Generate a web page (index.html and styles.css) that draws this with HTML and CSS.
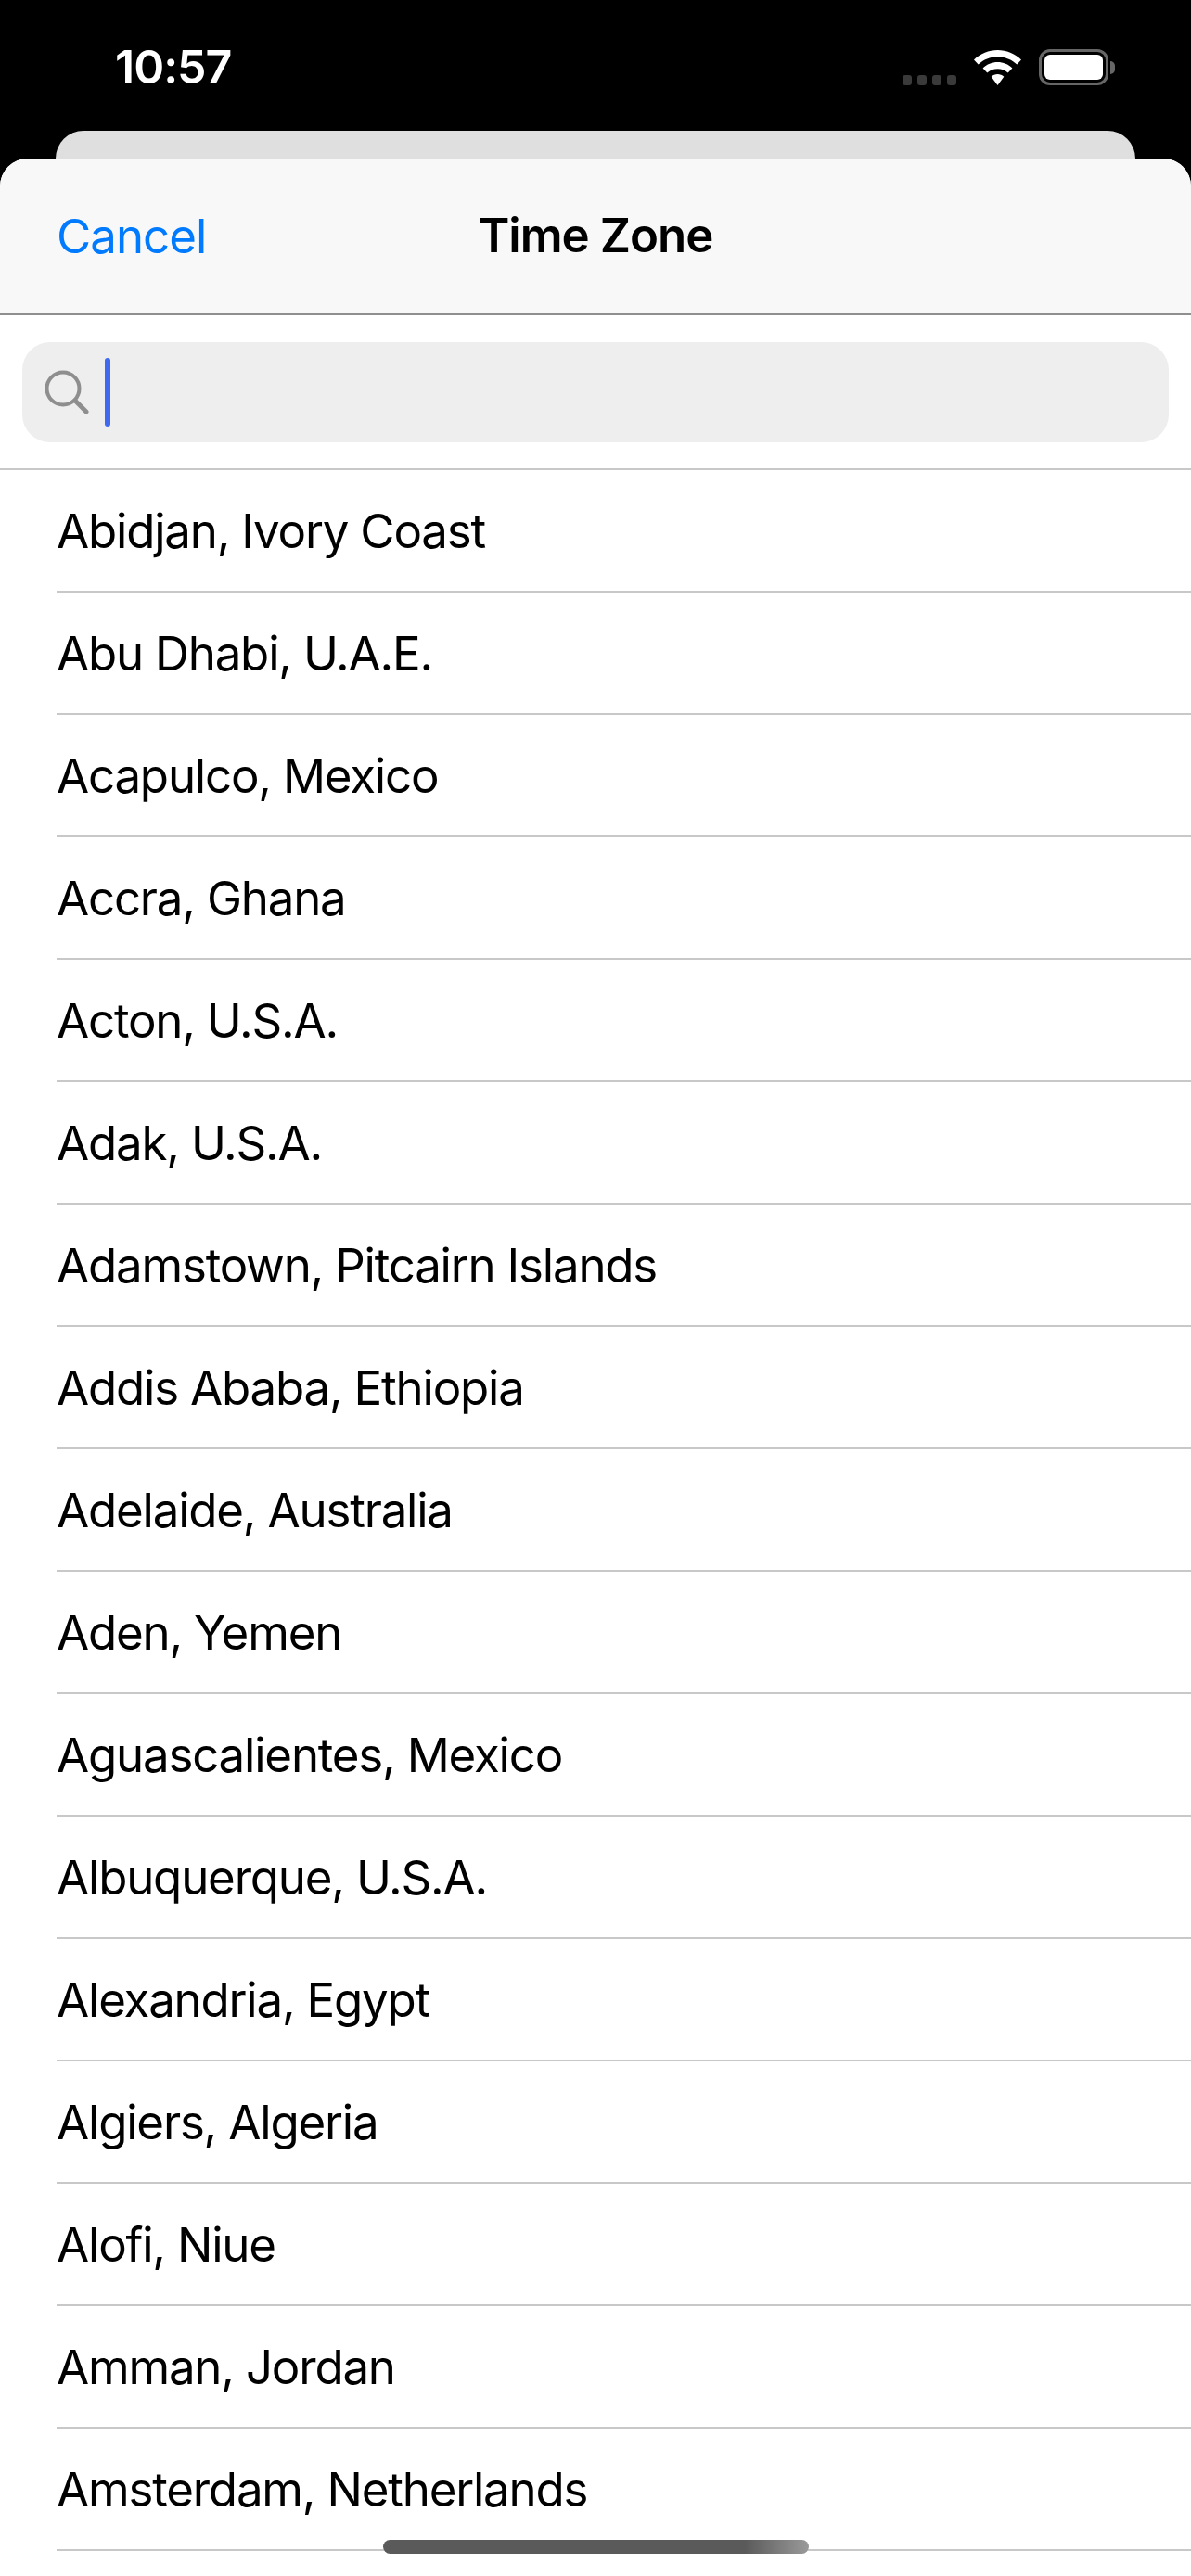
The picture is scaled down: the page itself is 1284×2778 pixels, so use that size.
FILE: index.html
```html
<!DOCTYPE html>
<html lang="en">
<head>
<meta charset="utf-8">
<title>Time Zone</title>
<link rel="stylesheet" href="styles.css">
</head>
<body>
<div class="phone">
  <header class="status">
    <span class="time">10:57</span>
    <div class="status-icons">
      <div class="signal"><i></i><i></i><i></i><i></i></div>
      <svg class="wifi" width="51" height="38" viewBox="0 0 51 38" aria-hidden="true">
        <path fill="#fff" d="M25.5 0C35 0 44 3.800 51 10.500L46.300 15.600C40.800 10.300 33.400 7.300 25.500 7.300S10.200 10.300 4.700 15.600L0 10.500C7 3.800 16 0 25.500 0Z"/>
        <path fill="#fff" d="M25.500 13C31.500 13 37.100 15.300 41.400 19.400L36.700 24.500C33.700 21.700 29.800 20.200 25.500 20.200S17.300 21.700 14.300 24.500L9.600 19.400C13.900 15.300 19.500 13 25.500 13Z"/>
        <path fill="#fff" d="M25.500 26C28.100 26 30.500 27 32.300 28.700L25.500 38L18.700 28.700C20.500 27 22.900 26 25.500 26Z"/>
      </svg>
      <div class="battery"><div class="battery-fill"></div></div>
      <div class="battery-cap"></div>
    </div>
  </header>
  <div class="back-card"></div>
  <main class="sheet">
    <nav class="navbar">
      <a class="cancel">Cancel</a>
      <h1 class="title">Time Zone</h1>
    </nav>
    <div class="search-wrap">
      <div class="search">
        <svg class="search-icon" width="48" height="48" viewBox="0 0 48 48" aria-hidden="true">
          <circle cx="20" cy="20" r="17.500" fill="none" stroke="#8e8e8e" stroke-width="4"/>
          <path d="M33 33L45 45" stroke="#8e8e8e" stroke-width="5" stroke-linecap="round"/>
        </svg>
        <div class="caret"></div>
      </div>
    </div>
    <ul class="zones">
      <li>Abidjan, Ivory Coast</li>
      <li>Abu Dhabi, U.A.E.</li>
      <li>Acapulco, Mexico</li>
      <li>Accra, Ghana</li>
      <li>Acton, U.S.A.</li>
      <li>Adak, U.S.A.</li>
      <li>Adamstown, Pitcairn Islands</li>
      <li>Addis Ababa, Ethiopia</li>
      <li>Adelaide, Australia</li>
      <li>Aden, Yemen</li>
      <li>Aguascalientes, Mexico</li>
      <li>Albuquerque, U.S.A.</li>
      <li>Alexandria, Egypt</li>
      <li>Algiers, Algeria</li>
      <li>Alofi, Niue</li>
      <li>Amman, Jordan</li>
      <li>Amsterdam, Netherlands</li>
    </ul>
  </main>
  <div class="home-indicator"></div>
</div>
</body>
</html>
```
FILE: styles.css
```css
* { box-sizing: border-box; }
html, body { margin: 0; padding: 0; height: 100%; overflow: hidden; background: #000; }
body { font-family: Inter, "Liberation Sans", sans-serif; }

.phone { position: relative; display: flex; flex-direction: column; height: 2778px; background: #000; overflow: hidden; }

.status { flex: none; height: 141px; display: flex; justify-content: space-between; padding: 0 82px 0 124px; color: #fff; }
.time { margin-top: 42px; font-size: 50px; line-height: 60px; font-weight: 600; letter-spacing: -1px; }
.status-icons { display: flex; align-items: flex-start; padding-top: 53px; }
.signal { display: flex; gap: 6px; margin-top: 28px; margin-right: 19px; }
.signal i { display: block; width: 10px; height: 11px; border-radius: 3px; background: #3a3a3a; }
.wifi { margin-top: 1px; margin-right: 19px; }
.battery { width: 75px; height: 39px; padding: 3px; border: 3px solid #666; border-radius: 12px; }
.battery-fill { height: 100%; background: #fff; border-radius: 6px; }
.battery-cap { width: 5px; height: 14px; margin: 13px 0 0 2px; background: #666; border-radius: 0 7px 7px 0; }

.back-card { flex: none; height: 30px; margin: 0 60px; background: #dfdfdf; border-radius: 30px 30px 0 0; }

.sheet { flex: 1; min-height: 0; background: #fff; border-radius: 30px 30px 0 0; overflow: hidden; }

.navbar { position: relative; height: 169px; display: flex; align-items: center; justify-content: center; padding-bottom: 1px; background: #f8f8f8; border-bottom: 2px solid #8f8f8f; }
.cancel { position: absolute; left: 61px; top: 50%; transform: translateY(-50%); font-size: 51px; line-height: 60px; color: #007aff; letter-spacing: -1px; }
.title { margin: 0; font-size: 51px; line-height: 60px; font-weight: 600; color: #000; letter-spacing: -1px; }

.search-wrap { height: 167px; padding: 29px 24px 29px; border-bottom: 2px solid #c8c8c8; }
.search { height: 108px; display: flex; align-items: flex-start; background: #eee; border-radius: 30px; padding-left: 24px; }
.search-icon { margin-top: 30px; }
.caret { width: 6px; height: 74px; margin: 17px 0 0 17px; background: #4069f0; border-radius: 3px; }

.zones { list-style: none; margin: 0; padding: 0 0 0 61px; }
.zones li { height: 132px; display: flex; align-items: center; font-size: 51px; color: #000; border-bottom: 2px solid #c8c8c8; letter-spacing: -1.2px; }

.home-indicator { position: absolute; left: 413px; top: 2739px; width: 459px; height: 15px; border-radius: 8px; background: linear-gradient(90deg, #5a5a5a 0%, #5a5a5a 85%, #9a9a9a 100%); }
```
